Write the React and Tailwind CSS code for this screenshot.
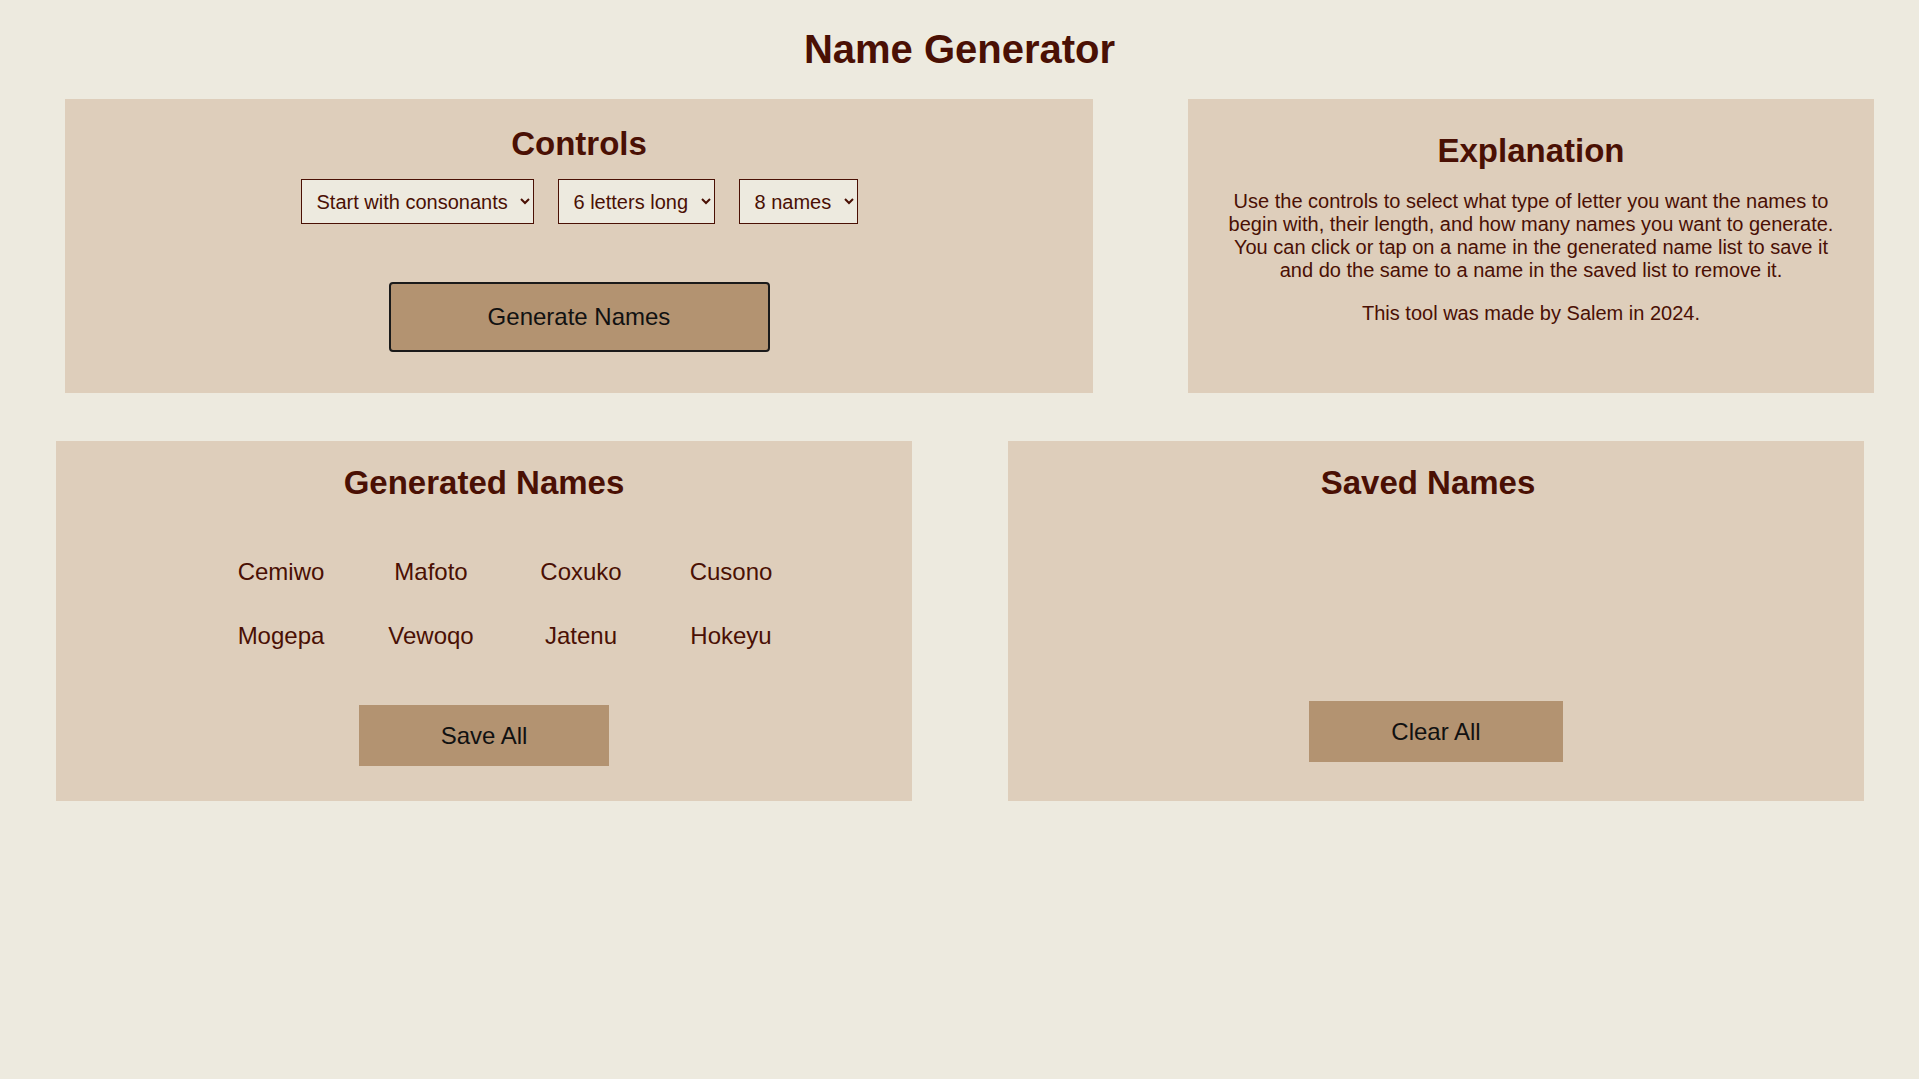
export default function App() {
  const names = ["Cemiwo", "Mafoto", "Coxuko", "Cusono", "Mogepa", "Vewoqo", "Jatenu", "Hokeyu"];
  return (
    <div className="min-h-screen bg-[#EDEADF] text-[#4A1004] font-['Liberation_Sans',Arial,sans-serif]">
      <h1 className="pt-[26px] text-center text-[40px] font-bold leading-[46px]">Name Generator</h1>
      <div className="mt-[27px] flex">
        <section className="ml-[65px] flex h-[294px] w-[1028px] flex-col items-center bg-[#DECEBB] pt-[26px]">
          <h2 className="text-[33px] font-bold leading-[37px]">Controls</h2>
          <div className="mt-[17px] flex gap-[24px]">
            <select className="h-[45px] w-[233px] border border-[#4A1004] bg-[#EDEADF] pl-[11px] pr-[6px] text-[20px] text-[#4A1004]" defaultValue="c">
              <option value="c">Start with consonants</option>
              <option value="v">Start with vowels</option>
            </select>
            <select className="h-[45px] w-[157px] border border-[#4A1004] bg-[#EDEADF] pl-[11px] pr-[6px] text-[20px] text-[#4A1004]" defaultValue="6">
              <option value="6">6 letters long</option>
            </select>
            <select className="h-[45px] w-[119px] border border-[#4A1004] bg-[#EDEADF] pl-[11px] pr-[6px] text-[20px] text-[#4A1004]" defaultValue="8">
              <option value="8">8 names</option>
            </select>
          </div>
          <button className="mt-[58px] h-[70px] w-[381px] rounded-[4px] border-2 border-[#1a1a1a] bg-[#B39371] text-[24px] text-[#111]">
            Generate Names
          </button>
        </section>
        <section className="ml-[95px] flex h-[294px] w-[686px] flex-col items-center bg-[#DECEBB] pt-[33px]">
          <h2 className="text-[33px] font-bold leading-[37px]">Explanation</h2>
          <p className="mt-[21px] whitespace-nowrap text-center text-[20px] leading-[23px]">
            Use the controls to select what type of letter you want the names to
            <br />
            begin with, their length, and how many names you want to generate.
            <br />
            You can click or tap on a name in the generated name list to save it
            <br />
            and do the same to a name in the saved list to remove it.
          </p>
          <p className="mt-[20px] text-center text-[20px] leading-[23px]">This tool was made by Salem in 2024.</p>
        </section>
      </div>
      <div className="mt-[48px] flex">
        <section className="ml-[56px] flex h-[360px] w-[856px] flex-col items-center bg-[#DECEBB] pt-[23px]">
          <h2 className="text-[33px] font-bold leading-[37px]">Generated Names</h2>
          <ul className="mt-[57px] grid grid-cols-[repeat(4,150px)] gap-y-[36px] pl-[44px]">
            {names.map((n) => (
              <li key={n} className="cursor-pointer text-center text-[24px] leading-[28px]">
                {n}
              </li>
            ))}
          </ul>
          <button className="mt-[55px] h-[61px] w-[250px] bg-[#B39371] text-[24px] text-[#111]">Save All</button>
        </section>
        <section className="ml-[96px] flex h-[360px] w-[856px] flex-col items-center bg-[#DECEBB] pt-[23px]">
          <h2 className="pr-[16px] text-[33px] font-bold leading-[37px]">Saved Names</h2>
          <button className="mt-[200px] h-[61px] w-[254px] bg-[#B39371] text-[24px] text-[#111]">Clear All</button>
        </section>
      </div>
    </div>
  );
}
